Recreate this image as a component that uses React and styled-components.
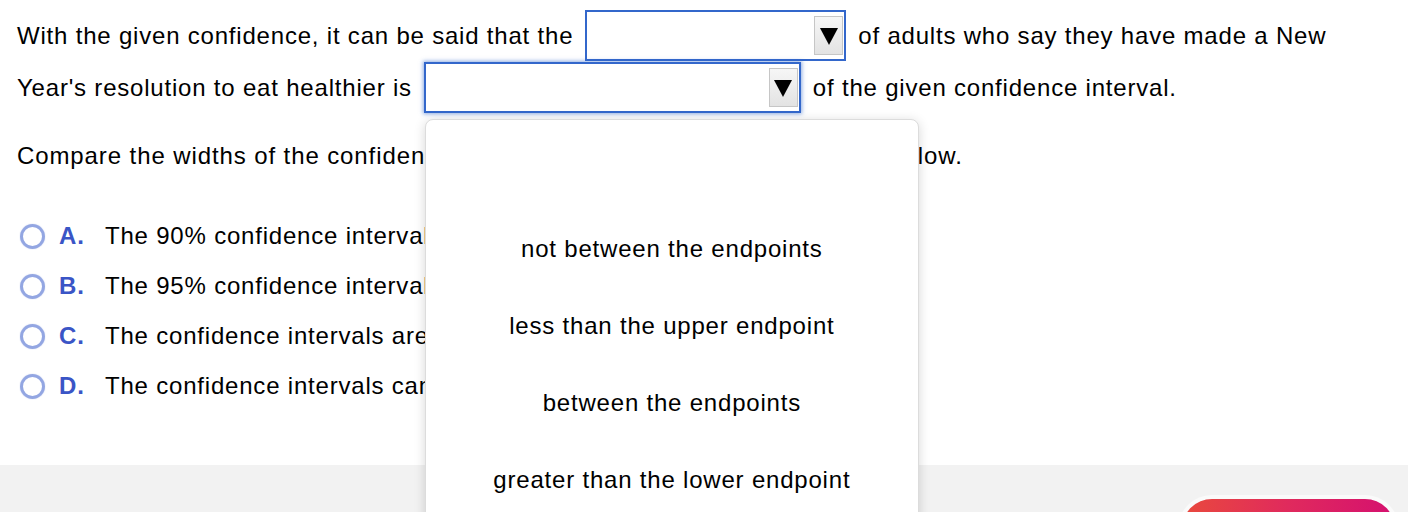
import React from 'react'
import styled, { createGlobalStyle } from 'styled-components'

const GlobalStyle = createGlobalStyle`
    body {
        margin: 0;
        background: #fff;
        font-family: "Liberation Sans", Arial, sans-serif;
        color: #000;
        overflow: hidden;
    }
`

const Page = styled.div`
    height: 512px;
    display: flex;
    flex-direction: column;
    overflow: hidden;
`

const Content = styled.div`
    height: 465px;
    flex-shrink: 0;
    padding: 10px 17px 0;
    box-sizing: border-box;
    font-size: 24px;
    letter-spacing: 0.8px;
`

const Row = styled.div`
    display: flex;
    align-items: center;
    height: 51px;
    margin-bottom: 1px;
    white-space: nowrap;
`

const SelectBox = styled.div`
    position: relative;
    width: ${p => p.width}px;
    height: 51px;
    box-sizing: border-box;
    margin: 0 12px;
    border: 2px solid #3367cb;
    background: #fff;
    display: flex;
    justify-content: flex-end;
    align-items: center;
    padding-right: 1px;
    flex-shrink: 0;
    box-shadow: ${p => p.focused ? '0 0 4px 1px rgba(51, 103, 203, 0.55)' : 'none'};
`

const ArrowButton = styled.div`
    width: 29px;
    height: 39px;
    box-sizing: border-box;
    border: 1px solid #c6c6c6;
    background: linear-gradient(#f6f6f6, #e3e3e3);
    display: flex;
    align-items: center;
    justify-content: center;
`

const Popup = styled.div`
    position: absolute;
    top: 55px;
    left: -1px;
    width: 494px;
    height: 420px;
    box-sizing: border-box;
    background: #fff;
    border: 1px solid #dcdcdc;
    border-radius: 8px;
    box-shadow: 0 2px 12px rgba(0, 0, 0, 0.16);
    padding-top: 13px;
    z-index: 10;
`

const PopupItem = styled.div`
    height: 77px;
    display: flex;
    align-items: center;
    justify-content: center;
    color: #000;
`

const Para = styled.div`
    margin-top: 28px;
    line-height: 30px;
    letter-spacing: 0.9px;
    white-space: nowrap;
`

const Options = styled.div`
    margin-top: 40px;
`

const Option = styled.div`
    display: flex;
    align-items: center;
    height: 50px;
    white-space: nowrap;
`

const Radio = styled.span`
    width: 25px;
    height: 25px;
    box-sizing: border-box;
    margin-left: 3px;
    border-radius: 50%;
    border: 3px solid #93a6e2;
    box-shadow: 0 0 1px rgba(80, 110, 210, 0.5);
    margin-right: 14px;
    flex-shrink: 0;
`

const Letter = styled.span`
    width: 46px;
    flex-shrink: 0;
    font-weight: bold;
    color: #3a55c6;
`

const Footer = styled.div`
    flex: 1;
    min-height: 0;
    background: #f2f2f2;
    display: flex;
    justify-content: flex-end;
    padding: 34px 13px 0 0;
`

const SubmitButton = styled.div`
    width: 213px;
    height: 60px;
    flex-shrink: 0;
    border-radius: 30px;
    background: linear-gradient(90deg, #e9493d, #e02a5d 50%, #d5106f);
    box-shadow: 0 0 0 4px #fafafa;
`

const Triangle = () => (
    <svg width="18" height="18" viewBox="0 0 18 18">
        <polygon points="0,1 18,1 9,18" fill="#000" />
    </svg>
)

const Select = ({ width, focused, children }) => (
    <SelectBox width={width} focused={focused}>
        <ArrowButton><Triangle /></ArrowButton>
        {children}
    </SelectBox>
)

const choices = [
    '',
    'not between the endpoints',
    'less than the upper endpoint',
    'between the endpoints',
    'greater than the lower endpoint',
]

const answers = [
    ['A.', 'The 90% confidence interval is wider.'],
    ['B.', 'The 95% confidence interval is wider.'],
    ['C.', 'The confidence intervals are the same width.'],
    ['D.', 'The confidence intervals cannot be compared.'],
]

export default function App() {
    return (
        <Page>
            <GlobalStyle />
            <Content>
                <Row>
                    With the given confidence, it can be said that the
                    <Select width={261} />
                    of adults who say they have made a New
                </Row>
                <Row>
                    Year's resolution to eat healthier is
                    <Select width={377} focused>
                        <Popup>
                            {choices.map((c, i) => (
                                <PopupItem key={i}>{c}</PopupItem>
                            ))}
                        </Popup>
                    </Select>
                    of the given confidence interval.
                </Row>
                <Para>Compare the widths of the confidence intervals. Choose the correct answer below.</Para>
                <Options>
                    {answers.map(([l, t]) => (
                        <Option key={l}>
                            <Radio />
                            <Letter>{l}</Letter>
                            {t}
                        </Option>
                    ))}
                </Options>
            </Content>
            <Footer>
                <SubmitButton />
            </Footer>
        </Page>
    )
}
